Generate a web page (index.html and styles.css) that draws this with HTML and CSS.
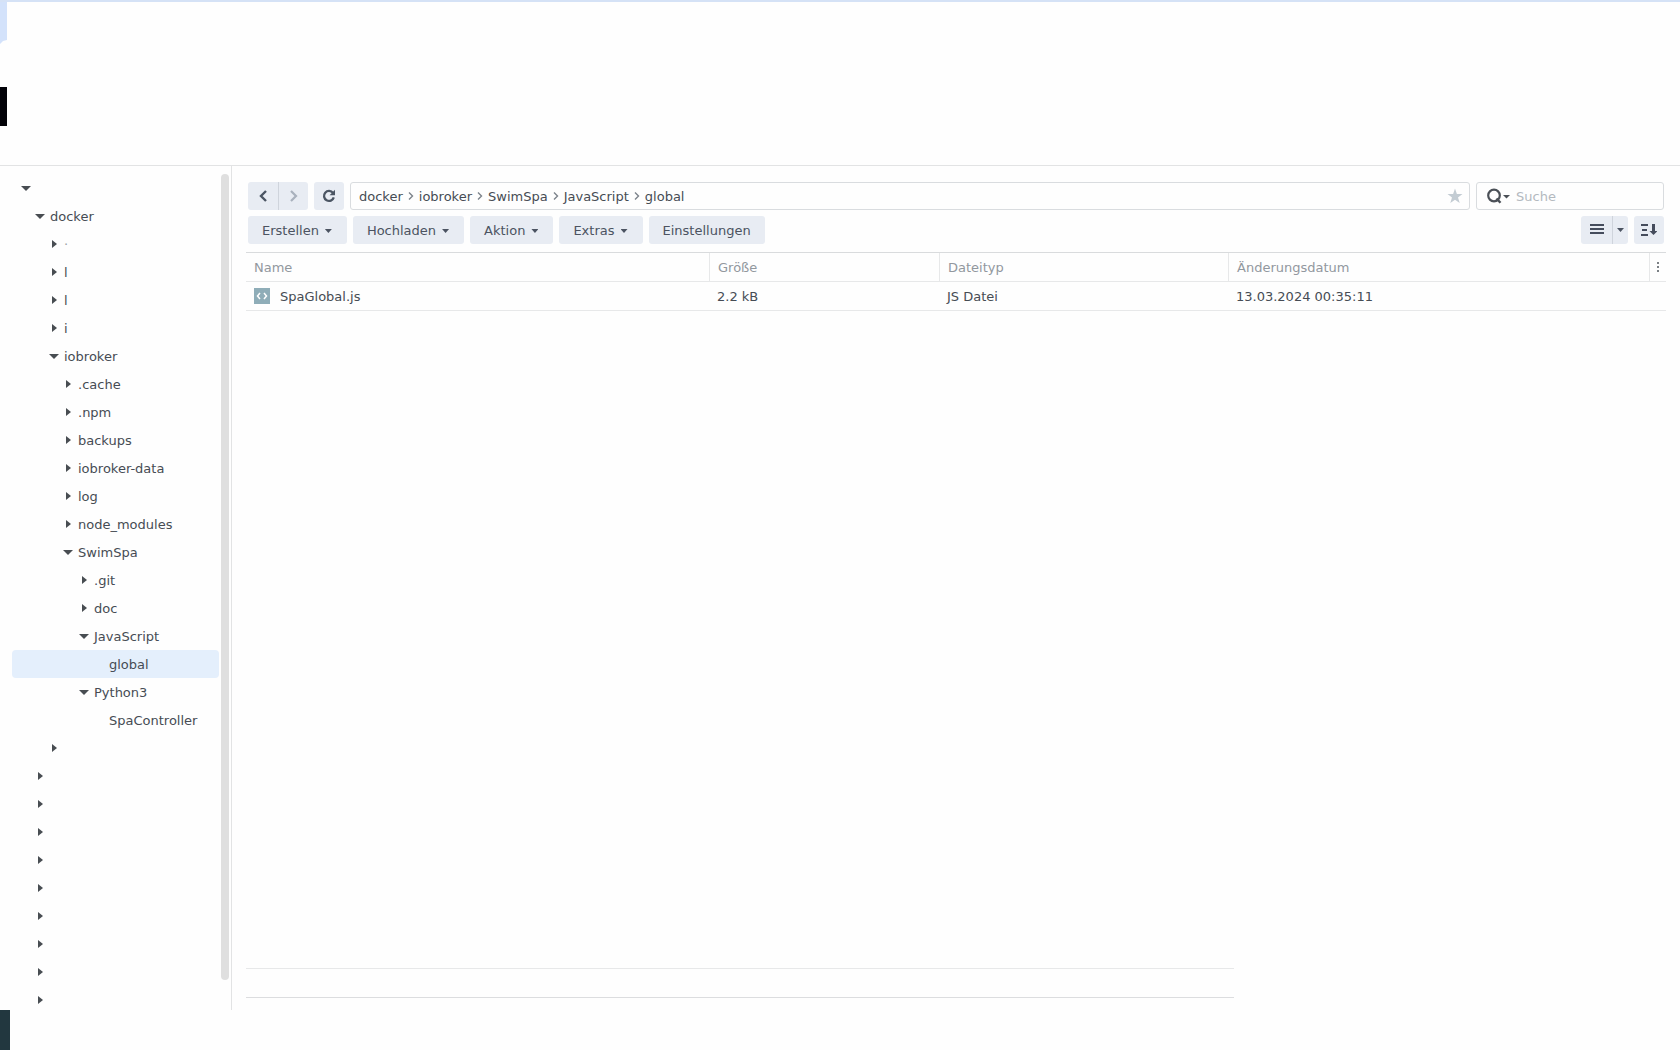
FILE: index.html
```html
<!DOCTYPE html>
<html lang="de">
<head>
<meta charset="utf-8">
<title>global</title>
<link rel="stylesheet" href="styles.css">
</head>
<body>
<header class="top">
  <div class="top-tab"></div>
  <div class="top-block"></div>
</header>
<main class="main">
  <nav class="sidebar">
    <ul class="tree">
      <li class="node l0 open"></li>
      <li class="node l1 open">docker</li>
      <li class="node l2 closed faint">·</li>
      <li class="node l2 closed">l</li>
      <li class="node l2 closed">l</li>
      <li class="node l2 closed">i</li>
      <li class="node l2 open">iobroker</li>
      <li class="node l3 closed">.cache</li>
      <li class="node l3 closed">.npm</li>
      <li class="node l3 closed">backups</li>
      <li class="node l3 closed">iobroker-data</li>
      <li class="node l3 closed">log</li>
      <li class="node l3 closed">node_modules</li>
      <li class="node l3 open">SwimSpa</li>
      <li class="node l4 closed">.git</li>
      <li class="node l4 closed">doc</li>
      <li class="node l4 open">JavaScript</li>
      <li class="node l5 selected">global</li>
      <li class="node l4 open">Python3</li>
      <li class="node l5">SpaController</li>
      <li class="node l2 closed"></li>
      <li class="node l1 closed"></li>
      <li class="node l1 closed"></li>
      <li class="node l1 closed"></li>
      <li class="node l1 closed"></li>
      <li class="node l1 closed"></li>
      <li class="node l1 closed"></li>
      <li class="node l1 closed"></li>
      <li class="node l1 closed"></li>
      <li class="node l1 closed"></li>
    </ul>
    <div class="scrollbar"></div>
  </nav>
  <section class="content">
    <div class="bar">
      <div class="group">
        <button class="btn nav" type="button" aria-label="Zurück"><svg width="10" height="14" viewBox="0 0 10 14"><path d="M8 2 3 7l5 5" fill="none" stroke="#4b5563" stroke-width="2.4"/></svg></button>
        <button class="btn nav split" type="button" aria-label="Vor"><svg width="10" height="14" viewBox="0 0 10 14"><path d="m2 2 5 5-5 5" fill="none" stroke="#a9b1bd" stroke-width="2.2"/></svg></button>
      </div>
      <button class="btn square" type="button" aria-label="Aktualisieren"><svg width="14" height="14" viewBox="0 0 14 14"><path d="M11 3.9A5 5 0 1 0 11.8 8.4" fill="none" stroke="#4b5563" stroke-width="2.3"/><path d="M13 .8v5.4H7.6z" fill="#4b5563"/></svg></button>
      <div class="path">
        <a href="#">docker</a><svg width="16" height="10" viewBox="0 0 16 10"><path d="m6 1.5 3.500 3.500L6 8.500" fill="none" stroke="#7c838b" stroke-width="1.4"/></svg><a href="#">iobroker</a><svg width="16" height="10" viewBox="0 0 16 10"><path d="m6 1.500 3.500 3.500L6 8.500" fill="none" stroke="#7c838b" stroke-width="1.4"/></svg><a href="#">SwimSpa</a><svg width="16" height="10" viewBox="0 0 16 10"><path d="m6 1.500 3.500 3.500L6 8.500" fill="none" stroke="#7c838b" stroke-width="1.4"/></svg><a href="#">JavaScript</a><svg width="16" height="10" viewBox="0 0 16 10"><path d="m6 1.500 3.500 3.500L6 8.500" fill="none" stroke="#7c838b" stroke-width="1.4"/></svg><a href="#">global</a>
        <button class="star" type="button" aria-label="Favorit"><svg width="16" height="16" viewBox="0 0 16 16"><path d="m8 .6 1.900 5.300 5.600.1-4.500 3.400 1.700 5.500L8 11.700l-4.700 3.200L5 9.400.5 6l5.600-.1z" fill="#c3ccd3"/></svg></button>
      </div>
      <div class="search">
        <svg width="25" height="16" viewBox="0 0 25 16"><circle cx="8" cy="7.500" r="5.800" fill="none" stroke="#4b5057" stroke-width="2.200"/><path d="m10.500 10.500 4 4.300" stroke="#4b5057" stroke-width="2.400"/><path d="M17 7h7l-3.500 3.500z" fill="#4b5057"/></svg>
        <input type="text" placeholder="Suche" aria-label="Suche">
      </div>
    </div>
    <div class="bar">
      <button class="btn menu drop" type="button">Erstellen</button>
      <button class="btn menu drop" type="button">Hochladen</button>
      <button class="btn menu drop" type="button">Aktion</button>
      <button class="btn menu drop" type="button">Extras</button>
      <button class="btn menu" type="button">Einstellungen</button>
      <div class="group right">
        <button class="btn view" type="button" aria-label="Ansicht"><svg width="14" height="12" viewBox="0 0 14 12"><path d="M0 1h14M0 5h14M0 9h14" stroke="#454c5c" stroke-width="2"/></svg></button>
        <button class="btn view-more split drop" type="button" aria-label="Ansicht wählen"></button>
      </div>
      <button class="btn square" type="button" aria-label="Sortieren"><svg width="16" height="14" viewBox="0 0 16 14"><path d="M0 2h7M1 7h5M0 12h7" stroke="#454c5c" stroke-width="2"/><path d="M11 1h3v7h2.500l-4 4-4-4H11z" fill="#454c5c"/></svg></button>
    </div>
    <table class="files">
      <colgroup><col class="c-name"><col class="c-size"><col class="c-type"><col><col class="c-more"></colgroup>
      <thead><tr><th>Name</th><th>Größe</th><th>Dateityp</th><th>Änderungsdatum</th><th class="more"><svg width="2" height="10" viewBox="0 0 2 10"><path d="M0 0h2v2H0zM0 4h2v2H0zM0 8h2v2H0z" fill="#7b8085"/></svg></th></tr></thead>
      <tbody><tr><td><span class="file"><svg width="16" height="16" viewBox="0 0 16 16"><path d="M0 0h16v16H0z" fill="#8fadb8"/><path d="M6 5 3.500 8 6 11M10 5l2.500 3L10 11" fill="none" stroke="#fff" stroke-width="1.500"/></svg>SpaGlobal.js</span></td><td>2.2 kB</td><td>JS Datei</td><td>13.03.2024 00:35:11</td><td></td></tr></tbody>
    </table>
    <div class="status"></div>
  </section>
</main>
<footer class="bottom"><div class="bottom-block"></div></footer>
</body>
</html>
```
FILE: styles.css
```css
* { box-sizing: border-box; }

body {
  margin: 0;
  height: 100vh;
  display: flex;
  flex-direction: column;
  overflow: hidden;
  background: #fefefe;
  color: #464c54;
  font: 13px/26px "DejaVu Sans", Verdana, sans-serif;
}

svg { display: block; flex: none; }

.top {
  flex: none;
  height: 166px;
  border-top: 2px solid #d5e2f6;
  border-bottom: 1px solid #e2e3e4;
}
.top-tab {
  width: 7px;
  height: 42px;
  background: #d3e2fb;
  clip-path: polygon(0 0, 100% 0, 100% 38px, 3px 39px, 0 100%);
}
.top-block {
  width: 7px;
  height: 39px;
  margin-top: 43px;
  background: #020208;
}

.main { flex: 1; min-height: 0; display: flex; }

.sidebar {
  flex: none;
  width: 232px;
  display: flex;
  gap: 2px;
  padding: 8px 2px 0 12px;
  border-right: 1px solid #e2e3e4;
  overflow: hidden;
}
.tree { flex: 1; margin: 0; padding: 0; list-style: none; }
.node {
  display: flex;
  align-items: center;
  gap: 5px;
  height: 28px;
  padding-top: 2px;
  border-radius: 4px;
  white-space: nowrap;
}
.node::before {
  content: "";
  flex: none;
  width: 10px;
  height: 8px;
  margin-bottom: 2px;
  background: #484d52;
}
.open::before { clip-path: polygon(0 2px, 10px 2px, 5px 7px); }
.closed::before { clip-path: polygon(3px 0, 8px 4px, 3px 8px); }
.l0 { padding-left: 9px; }
.l1 { padding-left: 23px; }
.l2 { padding-left: 37px; }
.l3 { padding-left: 51px; }
.l4 { padding-left: 67px; }
.l5 { padding-left: 97px; }
.l5::before { display: none; }
.faint { color: #9a9fa5; }
.selected { background: #e4effc; }
.scrollbar {
  flex: none;
  width: 8px;
  margin-bottom: 30px;
  border-radius: 4px;
  background: #dfdfdf;
}

.content {
  flex: 1;
  min-width: 0;
  display: flex;
  flex-direction: column;
  padding: 16px 14px 12px;
}

.bar { display: flex; gap: 6px; padding: 0 2px; margin-bottom: 6px; }
.group { display: flex; }
.right { margin-left: auto; }

.btn {
  display: flex;
  align-items: center;
  justify-content: center;
  height: 28px;
  padding: 0;
  border: 0;
  border-radius: 3px;
  background: #e8ecf3;
  color: #4b5361;
  font: inherit;
}
.group .btn:first-child { border-radius: 3px 0 0 3px; }
.btn.split { border-left: 1px solid #cfd4dc; border-radius: 0 3px 3px 0; }
.nav { width: 30px; }
.square { width: 30px; }
.view { width: 31px; }
.view-more { width: 16px; }
.menu { padding: 2px 14px 0; }
.menu.drop { gap: 6px; padding-right: 15px; }
.drop::after {
  content: "";
  width: 7px;
  height: 4px;
  background: #4b5361;
  clip-path: polygon(0 0, 100% 0, 50% 100%);
}

.path,
.search {
  display: flex;
  align-items: center;
  height: 28px;
  border: 1px solid #d9dcdf;
  border-radius: 3px;
}
.path { flex: 1; padding: 0 6px 0 8px; }
.path a { padding-top: 2px; color: #464c54; text-decoration: none; }
.star { margin-left: auto; padding: 0; border: 0; background: none; }
.search { width: 188px; padding-left: 9px; gap: 5px; }
.search input {
  flex: 1;
  min-width: 0;
  padding: 2px 0 0;
  border: 0;
  outline: 0;
  background: none;
  color: #464c54;
  font: inherit;
  line-height: 24px;
}
.search input::placeholder { color: #b3b9bf; }

.files {
  width: 100%;
  margin-top: 2px;
  table-layout: fixed;
  border-collapse: separate;
  border-spacing: 0;
  border-top: 1px solid #d9dbdd;
}
.c-name { width: 463px; }
.c-size { width: 230px; }
.c-type { width: 289px; }
.c-more { width: 17px; }
.files th,
.files td {
  height: 29px;
  padding: 2px 8px 0;
  border-bottom: 1px solid #e7e8e9;
  text-align: left;
  font-weight: normal;
}
.files th { color: #92989e; }
.files th + th { border-left: 1px solid #e7e8e9; }
.files th.more { padding: 0 7px; }
.file { display: flex; align-items: center; gap: 10px; }
.file svg { margin-bottom: 2px; }

.status {
  width: 100%;
  max-width: 988px;
  height: 30px;
  margin-top: auto;
  border-top: 1px solid #e7e8e9;
  border-bottom: 1px solid #dcdddf;
}

.bottom { flex: none; height: 40px; }
.bottom-block { width: 10px; height: 100%; background: #22373f; }
```
